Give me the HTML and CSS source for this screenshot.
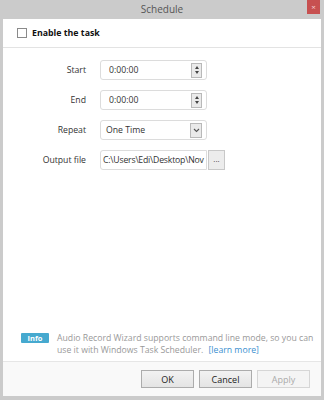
FILE: index.html
```html
<!DOCTYPE html>
<html>
<head>
    <meta charset="UTF-8">
    <title>Schedule</title>
    <link rel="stylesheet" href="styles.css">
</head>
<body>
<div class="window">
    <div class="titlebar"><!-- Title Bar -->
        <span></span>
        <span class="title">Schedule</span>
        <span class="close">&#215;</span>
    </div>
    <div class="panel">
        <div class="panel-head"><!-- Enable checkbox -->
            <span class="checkbox"></span>
            <strong>Enable the task</strong>
        </div>
        <div class="form"><!-- Fields -->
            <label>Start</label>
            <div class="field"><span class="value">0:00:00</span><span class="spin"><i class="up"></i><i class="down"></i></span></div>
            <span></span>

            <label>End</label>
            <div class="field"><span class="value">0:00:00</span><span class="spin"><i class="up"></i><i class="down"></i></span></div>
            <span></span>

            <label>Repeat</label>
            <div class="field select"><span class="value">One Time</span><span class="drop"><svg width="7" height="5" viewBox="0 0 7 5"><path d="M1 1 L3.5 3.5 L6 1" fill="none" stroke="#555" stroke-width="1.1"/></svg></span></div>
            <span></span>

            <label>Output file</label>
            <div class="field path"><span class="value">C:\Users\Edi\Desktop\Nov</span></div>
            <button class="browse">...</button>
        </div>
        <div class="spacer"></div>
        <div class="info"><!-- Info -->
            <span class="badge">Info</span>
            <p>Audio Record Wizard supports command line mode, so you can<br>use it with Windows Task Scheduler. <a href="#">[learn more]</a></p>
        </div>
        <div class="footer"><!-- Buttons -->
            <button class="button">OK</button>
            <button class="button">Cancel</button>
            <button class="button" disabled>Apply</button>
        </div>
    </div>
</div>
</body>
</html>
```

FILE: styles.css
```css
body {
    margin: 0;
    font-family: "Open Sans", "Noto Sans", sans-serif;
    font-size: 8.7px;
    color: #222;
    background-color: #cbcbcb;
}

.window {
    height: 400px;
    display: flex;
    flex-direction: column;
}

/* Title Bar */
.titlebar {
    height: 19px;
    display: grid;
    grid-template-columns: 1fr auto 1fr;
    align-items: start;
}

.title {
    font-size: 10px;
    line-height: 18px;
    color: #555;
}

.close {
    justify-self: end;
    margin-right: 4px;
    width: 13px;
    height: 14px;
    background-color: #c75050;
    color: #f3d0d0;
    font-size: 8px;
    line-height: 14px;
    text-align: center;
}

/* Panel */
.panel {
    flex: 1;
    margin: 0 3px 4px 3px;
    background-color: #fff;
    display: flex;
    flex-direction: column;
}

.panel-head {
    height: 28px;
    border-bottom: 1px solid #e3e3e3;
    display: flex;
    align-items: center;
    gap: 5px;
    padding: 0 0 0 14px;
}

.panel-head strong {
    font-size: 8.8px;
    color: #111;
}

.checkbox {
    width: 8px;
    height: 8px;
    border: 1px solid #8a8a8a;
    background-color: #fff;
}

/* Fields */
.form {
    display: grid;
    grid-template-columns: 83px 107px auto;
    grid-auto-rows: 20px;
    column-gap: 14px;
    row-gap: 10px;
    padding-top: 12px;
    align-items: center;
}

.form label {
    text-align: right;
    color: #333;
}

.field {
    height: 18px;
    border: 1px solid #dcdcdc;
    border-radius: 3px;
    display: flex;
    align-items: center;
    justify-content: space-between;
    padding: 0 4px 0 8px;
    color: #333;
}

.field.select {
    padding-left: 5px;
}

.field.path {
    padding: 0 0 0 2px;
    overflow: hidden;
    white-space: nowrap;
    letter-spacing: -0.2px;
    border-radius: 3px 0 0 3px;
}

.spin {
    width: 9px;
    height: 13px;
    border: 1px solid #b9b9b9;
    background-color: #eaeaea;
    display: flex;
    flex-direction: column;
    align-items: center;
    justify-content: space-evenly;
}

.spin i {
    width: 0;
    height: 0;
    border-left: 2.5px solid transparent;
    border-right: 2.5px solid transparent;
}

.spin .up {
    border-bottom: 3px solid #444;
}

.spin .down {
    border-top: 3px solid #444;
}

.drop {
    width: 10px;
    height: 13px;
    border: 1px solid #b9b9b9;
    background-color: #eaeaea;
    display: flex;
    align-items: center;
    justify-content: center;
}

.browse {
    margin-left: -13px;
    width: 17px;
    height: 20px;
    padding: 0 0 3px 0;
    border: 1px solid #c8c8c8;
    background-color: #ececec;
    font-family: inherit;
    font-size: 8px;
    color: #444;
}

.spacer {
    flex: 1;
}

/* Info */
.info {
    display: flex;
    align-items: flex-start;
    gap: 8px;
    padding: 0 4px 5px 18px;
}

.badge {
    flex: none;
    margin-top: 1px;
    width: 28px;
    height: 10px;
    background-color: #46a9cf;
    color: #fff;
    font-size: 7.5px;
    font-weight: bold;
    line-height: 10px;
    text-align: center;
    border-radius: 1px;
}

.info p {
    margin: 0;
    color: #999;
    line-height: 12px;
    white-space: nowrap;
}

.info a {
    margin-left: 3px;
    color: #3a8fd0;
    text-decoration: none;
}

/* Buttons */
.footer {
    height: 34px;
    border-top: 1px solid #e6e6e6;
    background-color: #f9f9f9;
    display: flex;
    justify-content: flex-end;
    align-items: center;
    gap: 5px;
    padding-right: 11px;
}

.button {
    width: 53px;
    height: 18px;
    padding: 0;
    border: 1px solid #acacac;
    background: linear-gradient(#f2f2f2, #e4e4e4);
    font-family: inherit;
    font-size: 9px;
    color: #222;
}

.button:disabled {
    border-color: #d6d6d6;
    background: #f4f4f4;
    color: #aaa;
}
```
